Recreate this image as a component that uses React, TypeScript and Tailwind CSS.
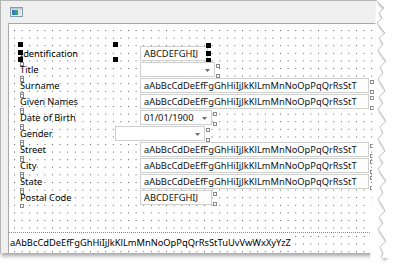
import React from "react";

const ALPHA = "aAbBcCdDeEfFgGhHiIjJkKlLmMnNoOpPqQrRsStT";

type Ctrl = { kind: "text" | "combo"; value?: string; w: string };
type Row = { label: string; lw: string; ctrl: Ctrl };

const rows: Row[] = [
  { label: "Identification", lw: "w-[131px]", ctrl: { kind: "text", value: "ABCDEFGHIJ", w: "w-[68px]" } },
  { label: "Title", lw: "w-[131px]", ctrl: { kind: "combo", w: "w-[75px]" } },
  { label: "Surname", lw: "w-[131px]", ctrl: { kind: "text", value: ALPHA, w: "w-[229px]" } },
  { label: "Given Names", lw: "w-[131px]", ctrl: { kind: "text", value: ALPHA, w: "w-[229px]" } },
  { label: "Date of Birth", lw: "w-[131px]", ctrl: { kind: "combo", value: "01/01/1900", w: "w-[72px]" } },
  { label: "Gender", lw: "w-[106px]", ctrl: { kind: "combo", w: "w-[90px]" } },
  { label: "Street", lw: "w-[131px]", ctrl: { kind: "text", value: ALPHA, w: "w-[229px]" } },
  { label: "City", lw: "w-[131px]", ctrl: { kind: "text", value: ALPHA, w: "w-[229px]" } },
  { label: "State", lw: "w-[131px]", ctrl: { kind: "text", value: ALPHA, w: "w-[229px]" } },
  { label: "Postal Code", lw: "w-[131px]", ctrl: { kind: "text", value: "ABCDEFGHIJ", w: "w-[72px]" } },
];

function Hollow({ className }: { className: string }) {
  return <span className={"absolute w-[4px] h-[4px] border border-[#8a8a8a] bg-white " + className} />;
}

function Black({ className }: { className: string }) {
  return <span className={"absolute w-[5px] h-[5px] bg-black " + className} />;
}

function Arrow() {
  return (
    <svg width="5" height="3" viewBox="0 0 5 3" className="absolute right-[4px] top-[6px]">
      <path d="M0 0 L5 0 L2.5 3 Z" fill="#6b6b6b" />
    </svg>
  );
}

function Control({ c, selected }: { c: Ctrl; selected: boolean }) {
  return (
    <div
      className={
        "relative h-[15px] border border-[#cfcfcf] bg-white pl-[3px] text-[9.3px] leading-[13px] text-[#111] whitespace-nowrap " +
        c.w
      }
    >
      {c.value}
      {c.kind === "combo" && <Arrow />}
      {selected ? (
        <>
          <Black className="-right-[4px] -top-[4px]" />
          <Black className="-right-[4px] top-[4px]" />
          <Black className="-right-[4px] top-[11px]" />
        </>
      ) : (
        <>
          <Hollow className="-right-[6px] top-[1px]" />
          <Hollow className="-right-[6px] -bottom-[2px]" />
        </>
      )}
    </div>
  );
}

function TornEdge() {
  const pts = [
    [376, 0], [380, 4], [384, 8], [379, 13], [382, 18], [377, 23], [381, 28], [385, 33], [379, 38],
    [383, 44], [378, 50], [382, 56], [386, 61], [380, 67], [383, 73], [378, 79], [382, 85], [385, 91],
    [379, 97], [383, 103], [378, 109], [382, 115], [386, 121], [380, 127], [383, 133], [378, 139],
    [382, 145], [385, 151], [379, 157], [383, 163], [378, 169], [382, 175], [386, 181], [380, 187],
    [383, 193], [378, 199], [382, 205], [385, 211], [379, 217], [383, 223], [378, 229], [382, 235],
    [386, 241], [380, 247], [383, 253], [381, 258],
  ];
  const line = pts.map((p) => p.join(",")).join(" ");
  const fill = line + " 394,258 394,0";
  const shadow = pts.map((p) => `${p[0] + 3},${p[1] + 2}`).join(" ");
  return (
    <svg width="394" height="266" className="absolute left-0 top-0 pointer-events-none">
      <defs>
        <filter id="blur" x="-50%" y="-50%" width="200%" height="200%">
          <feGaussianBlur stdDeviation="1.6" />
        </filter>
      </defs>
      <polygon points={fill + " 394,266 370,266"} fill="#ffffff" />
      <polyline points={shadow} fill="none" stroke="#8a8a8a" strokeWidth="2.5" filter="url(#blur)" />
      <polygon points={fill} fill="#ffffff" />
      <polyline points={line} fill="none" stroke="#b8b8b8" strokeWidth="0.8" />
    </svg>
  );
}

function Dots({ id, y }: { id: string; y: number }) {
  return (
    <svg className="absolute inset-0" width="100%" height="100%">
      <defs>
        <pattern id={id} width="7.6" height="7.6" patternUnits="userSpaceOnUse" x="5" y={y}>
          <rect x="0" y="0" width="1" height="1" fill="#5e5e5e" />
        </pattern>
      </defs>
      <rect width="100%" height="100%" fill={`url(#${id})`} />
    </svg>
  );
}

export default function App() {
  return (
    <div className="relative w-[394px] h-[266px] bg-white overflow-hidden font-['Noto_Sans','Open_Sans',sans-serif]">
      <div className="w-[390px] h-[253px] flex flex-col bg-[#f0f0f0] border-l border-t border-[#b4b4b4] shadow-[1px_3px_4px_rgba(0,0,0,0.35)]">
        <div className="h-[22px] flex items-start pl-[9px] pt-[6px]">
          <svg width="13" height="10" viewBox="0 0 13 10">
            <rect x="0.5" y="0.5" width="12" height="9" fill="#e8eef4" stroke="#8a9aa8" />
            <rect x="1" y="1" width="11" height="1.5" fill="#b9c7d4" />
            <rect x="2" y="3" width="3" height="5" fill="#2f7fb8" />
            <rect x="5" y="3" width="3" height="5" fill="#3aa564" />
            <rect x="8" y="3" width="3" height="5" fill="#d6e2ec" />
          </svg>
        </div>
        <div className="flex-1 pl-[7px] flex">
          <div className="flex-1 flex flex-col bg-white border-l border-t border-[#a8a8a8]">
            <div className="relative h-[208px]">
              <Dots id="dots" y={6} />
              <div className="relative flex flex-col pt-[22px] text-[9.3px] text-black">
                {rows.map((r, i) => (
                  <div key={r.label} className="flex h-[16px]">
                    <div className={"relative pl-[11px] " + r.lw}>
                      <span className="relative inline-block leading-[15px] pr-[2px]">
                        {r.label}
                        {i === 0 ? (
                          <>
                            <Black className="-left-[2px] -top-[4px]" />
                            <Black className="-left-[2px] top-[4px]" />
                            <Black className="-left-[2px] top-[11px]" />
                          </>
                        ) : (
                          <>
                            <Hollow className="left-0 top-0" />
                            <Hollow className="left-0 bottom-[-3px]" />
                          </>
                        )}
                      </span>
                      {i === 0 && (
                        <>
                          <Black className="left-[104px] -top-[4px]" />
                          <Black className="left-[104px] top-[11px]" />
                        </>
                      )}
                    </div>
                    <Control c={r.ctrl} selected={i === 0} />
                  </div>
                ))}
              </div>
            </div>
            <div className="relative flex-1 border-t border-dotted border-[#8a8a8a] flex items-center pl-[1px]">
              <Dots id="dots2" y={3} />
              <span className="relative bg-white text-[9.3px] leading-[14px] text-black whitespace-nowrap">
                aAbBcCdDeEfFgGhHiIjJkKlLmMnNoOpPqQrRsStTuUvVwWxXyYzZ
              </span>
            </div>
          </div>
        </div>
      </div>
      <TornEdge />
    </div>
  );
}
